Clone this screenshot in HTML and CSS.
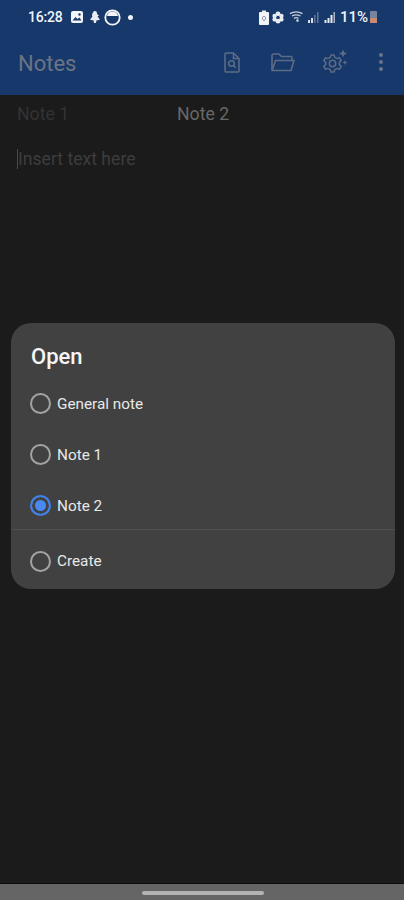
FILE: index.html
```html
<!DOCTYPE html>
<html lang="en">

<head>
  <meta charset="UTF-8" />
  <meta name="viewport" content="width=device-width, initial-scale=1.0" />
  <title>Notes</title>
  <link rel="stylesheet" href="styles.css">
</head>

<body>
  <div class="app">
    <div class="header">
      <div class="status-bar">
        <div class="status-left">
          <span class="clock">16:28</span>
          <svg class="st-icon" width="14" height="14" viewBox="0 0 14 14">
            <rect x="1" y="1" width="12" height="12" rx="2" fill="#f2f4f7" />
            <path d="M2.5 10.5 L5.5 7 L7.5 9 L9.5 7.5 L11.5 10.5 Z" fill="#17386b" />
            <circle cx="9.5" cy="4.5" r="1.2" fill="#17386b" />
          </svg>
          <svg class="st-icon" width="12" height="14" viewBox="0 0 12 14">
            <path d="M6 1 C7.6 1 8.2 2.4 8 4 L10 5.5 L8.6 6.4 L11 9.8 L7.4 10.4 L7 13 L5 13 L4.6 10.4 L1 9.8 L3.4 6.4 L3 5 C3.4 3 4.4 1 6 1 Z" fill="#e8ebf0" />
          </svg>
          <svg class="st-icon disc" width="17" height="17" viewBox="0 0 17 17">
            <circle cx="8.5" cy="8.5" r="7.2" fill="none" stroke="#f2f4f7" stroke-width="1.8" />
            <path d="M3 7 A5.6 5.6 0 0 1 14 7 Z" fill="#f2f4f7" />
          </svg>
          <span class="dot"></span>
        </div>
        <div class="status-right">
          <svg class="st-icon" width="10" height="15" viewBox="0 0 10 15">
            <path d="M3 0.5 H7 V2 H9 Q10 2 10 3 V14 Q10 15 9 15 H1 Q0 15 0 14 V3 Q0 2 1 2 H3 Z" fill="#f2f4f7" />
            <path d="M3 8 L5 6 L7 8 L5 11 Z" fill="none" stroke="#8a97ad" stroke-width="1" />
          </svg>
          <svg class="st-icon" width="12" height="13" viewBox="0 0 12 13">
            <circle cx="6" cy="2.8" r="2.4" fill="#e8ebf0" />
            <circle cx="6" cy="10.2" r="2.4" fill="#e8ebf0" />
            <circle cx="2.6" cy="5" r="2.2" fill="#e8ebf0" />
            <circle cx="9.4" cy="5" r="2.2" fill="#e8ebf0" />
            <circle cx="2.6" cy="8.4" r="2.2" fill="#e8ebf0" />
            <circle cx="9.4" cy="8.4" r="2.2" fill="#e8ebf0" />
            <circle cx="6" cy="6.5" r="1.2" fill="#17386b" />
          </svg>
          <svg class="st-icon wifi" width="15" height="12" viewBox="0 0 15 12">
            <path d="M1 2.6 Q7 -1 13.5 2.6 M3 5 Q7 2.6 11.5 5 M5 7.4 Q7 6 9.5 7.4" fill="none" stroke="#c9d0db" stroke-width="1.3" />
            <circle cx="8.5" cy="9.6" r="1.3" fill="#c9d0db" />
          </svg>
          <svg class="st-icon" width="12" height="12" viewBox="0 0 12 12">
            <path d="M1 9 H3 V12 H1 Z M4 7 H6 V12 H4 Z" fill="#d8dde6" />
            <path d="M7 4 H8.5 V12 H7 Z M10 1 H11.5 V12 H10 Z" fill="#62749a" />
          </svg>
          <svg class="st-icon signal" width="12" height="12" viewBox="0 0 12 12">
            <path d="M0.5 9 H2.5 V12 H0.5 Z M3.5 7 H5.5 V12 H3.5 Z M6.5 4 H8.5 V12 H6.5 Z" fill="#e8ebf0" />
            <path d="M9.5 1 H11 V12 H9.5 Z" fill="#aab4c6" />
          </svg>
          <span class="battery-text">11%</span>
          <span class="battery"><span class="battery-level"></span></span>
        </div>
      </div>
      <div class="toolbar">
        <div class="app-title">Notes</div>
        <div class="toolbar-icons">
          <svg class="tool-file" width="16" height="21" viewBox="0 0 16 21" fill="none" stroke="#5d6c85" stroke-width="1.5">
            <path d="M1 2 Q1 1 2 1 H9.5 L15 6.5 V19 Q15 20 14 20 H2 Q1 20 1 19 Z" />
            <path d="M9.5 1 V6.5 H15" />
            <circle cx="7.5" cy="11.5" r="2.8" />
            <path d="M9.6 13.6 L11.8 15.8" />
          </svg>
          <svg class="tool-folder" width="24" height="19" viewBox="0 0 24 19" fill="none" stroke="#5d6c85" stroke-width="1.6">
            <path d="M1 17 V2.5 Q1 1 2.5 1 H8 L10.5 3.5 H20 Q21 3.5 21 5 V7" />
            <path d="M1.2 17.5 L4.5 7.5 H23 L20 17.5 Z" />
          </svg>
          <svg class="tool-gear" width="27" height="26" viewBox="0 0 27 26" fill="none" stroke="#5d6c85" stroke-width="1.5">
            <path d="M9 6 L12 6 L12.8 8.4 L15.2 9.6 L17.6 8.8 L19.2 11.6 L17.3 13.4 L17.3 15.6 L19.2 17.4 L17.6 20.2 L15.2 19.4 L12.8 20.6 L12 23 L9 23 L8.2 20.6 L5.8 19.4 L3.4 20.2 L1.8 17.4 L3.7 15.6 L3.7 13.4 L1.8 11.6 L3.4 8.8 L5.8 9.6 L8.2 8.4 Z" stroke-linejoin="round" />
            <circle cx="10.5" cy="14.5" r="3.2" />
            <path d="M21 0.5 L22.2 3.3 L25 4.5 L22.2 5.7 L21 8.5 L19.8 5.7 L17 4.5 L19.8 3.3 Z" fill="#5d6c85" stroke="none" />
            <path d="M23 11 L23.8 12.7 L25.5 13.5 L23.8 14.3 L23 16 L22.2 14.3 L20.5 13.5 L22.2 12.7 Z" fill="#5d6c85" stroke="none" />
          </svg>
          <div class="more">
            <span></span><span></span><span></span>
          </div>
        </div>
      </div>
    </div>

    <div class="content">
      <div class="tabs">
        <div class="tab">Note 1</div>
        <div class="tab tab-active">Note 2</div>
      </div>
      <div class="editor"><span class="caret"></span>Insert text here</div>

      <div class="dialog">
        <h2>Open</h2>
        <div class="option"><span class="radio"></span>General note</div>
        <div class="option"><span class="radio"></span>Note 1</div>
        <div class="option"><span class="radio checked"></span>Note 2</div>
        <div class="option option-create"><span class="radio"></span>Create</div>
      </div>
    </div>

    <div class="nav-bar"><span class="nav-handle"></span></div>
  </div>
</body>

</html>
```

FILE: styles.css
```css
body {
  margin: 0;
  padding: 0;
  background-color: #1b1b1b;
  font-family: 'Roboto', sans-serif;
}

.app {
  width: 404px;
  height: 900px;
  display: flex;
  flex-direction: column;
  overflow: hidden;
}

.header {
  height: 95px;
  background-color: #17386b;
  flex-shrink: 0;
}

.status-bar {
  height: 33px;
  padding: 1px 27px 0 28px;
  display: flex;
  justify-content: space-between;
  align-items: center;
  color: #f2f4f7;
  font-size: 14px;
  box-sizing: border-box;
}

.status-left,
.status-right {
  display: flex;
  align-items: center;
}

.status-left {
  gap: 5px;
}

.status-right {
  gap: 3px;
}

.clock {
  width: 37px;
  font-weight: 500;
  letter-spacing: -0.2px;
}

.disc {
  margin-left: -2px;
}

.dot {
  width: 5px;
  height: 5px;
  margin-left: 2px;
  border-radius: 50%;
  background-color: #f2f4f7;
}

.wifi {
  margin-left: 2px;
}

.signal {
  margin-left: 2px;
}

.battery-text {
  margin-left: 1px;
  font-weight: 500;
  font-size: 15px;
}

.battery {
  width: 7px;
  height: 12px;
  margin-left: -1px;
  background-color: #77849a;
  border-radius: 1px;
  display: flex;
  align-items: flex-end;
}

.battery-level {
  width: 100%;
  height: 5px;
  background-color: #c98a72;
}

.toolbar {
  height: 61px;
  padding: 0 21px 0 18px;
  display: flex;
  justify-content: space-between;
  align-items: center;
}

.app-title {
  font-size: 22px;
  color: #6a7483;
}

.toolbar-icons {
  display: flex;
  align-items: center;
  margin-top: -3px;
}

.tool-file {
  margin-right: 31px;
}

.tool-folder {
  margin-right: 27px;
}

.tool-gear {
  margin-right: 30px;
}

.more {
  width: 4px;
  display: flex;
  flex-direction: column;
  gap: 3px;
}

.more span {
  width: 4px;
  height: 4px;
  border-radius: 50%;
  background-color: #67758b;
}

.content {
  flex: 1;
  position: relative;
}

.tabs {
  display: flex;
  padding: 9px 0 0 17px;
  font-size: 17.7px;
  height: 25px;
}

.tab {
  width: 160px;
  color: #333333;
}

.tab-active {
  color: #686868;
}

.editor {
  margin: 20px 0 0 17px;
  font-size: 17.6px;
  color: #3d3d3d;
  display: flex;
  align-items: center;
}

.caret {
  width: 1px;
  height: 20px;
  background-color: #4a4a4a;
}

.dialog {
  position: absolute;
  top: 228px;
  left: 11px;
  right: 9px;
  height: 266px;
  box-sizing: border-box;
  background-color: #414141;
  border-radius: 20px;
  padding: 20px 20px 0 19px;
  color: #e8e8e8;
}

.dialog h2 {
  margin: 0 0 7px 1px;
  font-size: 22px;
  font-weight: 500;
  line-height: 28px;
  color: #f6f6f6;
}

.option {
  height: 51px;
  display: flex;
  align-items: center;
  gap: 6px;
  font-size: 15.3px;
}

.option-create {
  height: 62px;
  margin: -2px -20px 0 -19px;
  padding: 0 20px 0 19px;
  border-top: 1px solid #505050;
}

.radio {
  width: 17px;
  height: 17px;
  border: 2px solid #a3a3a3;
  border-radius: 50%;
  flex-shrink: 0;
}

.radio.checked {
  border-color: #3f82ea;
  background-color: #4a8af0;
  box-shadow: inset 0 0 0 3px #414141;
}

.nav-bar {
  height: 17px;
  flex-shrink: 0;
  box-sizing: border-box;
  border-top: 1px solid #0c0c0c;
  background-color: #656565;
  display: flex;
  justify-content: center;
  padding: 7px 0 0 2px;
}

.nav-handle {
  width: 122px;
  height: 4px;
  background-color: #b3b3b3;
  border-radius: 2px;
}
```
